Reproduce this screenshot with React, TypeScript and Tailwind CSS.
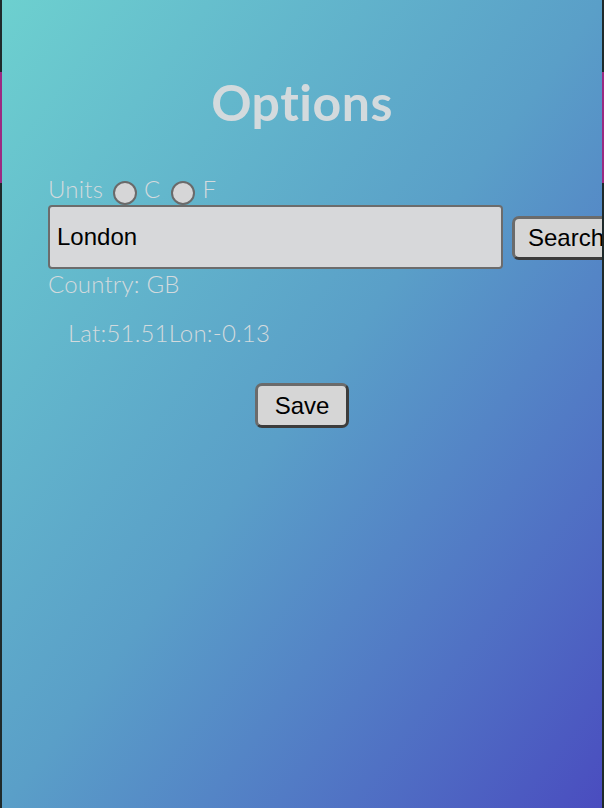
export default function App() {
    return (
        <div className="flex h-[808px] w-[604px] overflow-hidden bg-[#1f2a2b]">
            <div className="flex w-[2px] flex-col">
                <div className="h-[72px]" />
                <div className="h-[111px] bg-[#9c2a82]" />
            </div>
            <main
                className="flex-1 overflow-hidden bg-gradient-to-br from-[#6dd0cf] via-[#5a9fc8] to-[#4a4cbf] font-['Lato',sans-serif] text-[#d3dadd]"
            >
                <h1 className="mt-[74px] text-center text-[50px] font-bold leading-[56px] tracking-[0.5px]">Options</h1>
                <div className="mt-[46px] pl-[46px]">
                    <div className="flex h-[29px] items-start text-[24px] font-light leading-[26px] tracking-[0.2px]">
                        <span>Units</span>
                        <span className="ml-[10px] mt-[5px] h-[24px] w-[24px] rounded-full border-2 border-[#6a6a6a] bg-[#d6d6d7]" />
                        <span className="ml-[7px]">C</span>
                        <span className="ml-[10px] mt-[5px] h-[24px] w-[24px] rounded-full border-2 border-[#6a6a6a] bg-[#d6d6d7]" />
                        <span className="ml-[8px]">F</span>
                    </div>
                    <div className="flex items-center whitespace-nowrap">
                        <div className="flex h-[64px] w-[455px] shrink-0 items-center rounded-[4px] border-2 border-[#6c6c6c] bg-[#d7d8da] pl-[7px] font-['Liberation_Sans',sans-serif] text-[24px] text-black">
                            London
                        </div>
                        <button className="ml-[9px] mt-[2px] h-[44px] shrink-0 rounded-[7px] border-[3px] border-[#3c3c3c] border-l-[#6b6b6b] border-t-[#6b6b6b] bg-[#d6d6d6] px-[13px] font-['Liberation_Sans',sans-serif] text-[24px] leading-none text-black">
                            Search
                        </button>
                    </div>
                    <p className="mt-[1px] text-[24px] font-light leading-[28px] tracking-[0.2px]">Country: GB</p>
                    <p className="mt-[21px] pl-[20px] text-[24px] font-light leading-[28px] tracking-[0.2px]">Lat:51.51Lon:-0.13</p>
                </div>
                <div className="mt-[36px] flex justify-center">
                    <button className="h-[45px] rounded-[7px] border-[3px] border-[#3c3c3c] border-l-[#6b6b6b] border-t-[#6b6b6b] bg-[#d6d6d6] px-[17px] font-['Liberation_Sans',sans-serif] text-[24px] leading-none text-black">
                        Save
                    </button>
                </div>
            </main>
            <div className="flex w-[2px] flex-col">
                <div className="h-[72px]" />
                <div className="h-[111px] bg-[#9c2a82]" />
            </div>
        </div>
    )
}
